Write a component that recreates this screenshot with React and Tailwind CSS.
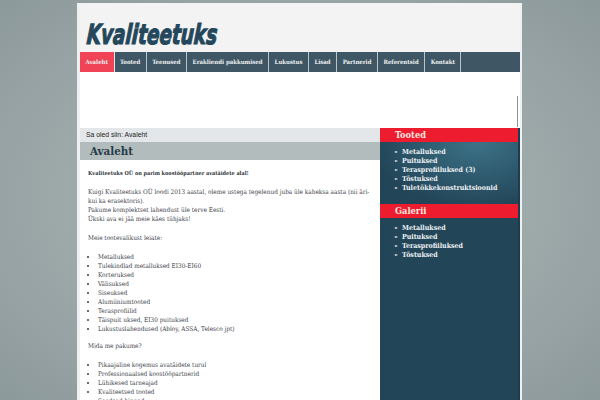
const navItems = ['Tooted', 'Teenused', 'Erakliendi pakkumised', 'Lukustus', 'Lisad', 'Partnerid', 'Referentsid', 'Kontakt'];
const products = ['Metalluksed', 'Tulekindlad metalluksed EI30-EI60', 'Korteruksed', 'Välisuksed', 'Siseuksed', 'Alumiiniumtooted', 'Terasprofiilid', 'Täispuit uksed,  EI30 puituksed', 'Lukustuslahendused  (Abloy,  ASSA,  Telesco jpt)'];
const offers = ['Pikaajaline kogemus avatäidete turul', 'Professionaalsed koostööpartnerid', 'Lühikesed tarneajad', 'Kvaliteetsed tooted', 'Soodsad hinnad'];
const tooted = ['Metalluksed', 'Puituksed', 'Terasprofiiluksed (3)', 'Tõstuksed', 'Tuletõkkekonstruktsioonid'];
const galerii = ['Metalluksed', 'Puituksed', 'Terasprofiiluksed', 'Tõstuksed'];

const SideList = ({ items }) => (
  <ul className="pl-[15px] pt-[5px] text-[7px] leading-[9px] font-bold whitespace-nowrap text-[#eef2f4]">
    {items.map((item) => (
      <li key={item} className="flex items-center">
        <span className="w-[7px] text-[4px]">►</span>
        <span>{item}</span>
      </li>
    ))}
  </ul>
);

const SideTitle = ({ children }) => (
  <h3 className="h-[14px] bg-[#ed1c2e] pl-[15px] text-[9.2px] leading-[14px] font-bold text-[#f6e9e0]">{children}</h3>
);

const App = () => {
  return (
    <div className="h-[400px] w-[600px] overflow-hidden bg-[radial-gradient(ellipse_at_center,#b0b9b9_0%,#9ca7a8_60%,#8c999b_100%)] pt-[3px] font-['DejaVu_Serif_Condensed','DejaVu_Serif',serif]">
      <div className="ml-[77px] h-[397px] w-[445px] bg-[#eef1f1] pl-[3px] pr-[2px]">
        <div className="flex h-[49px] items-end bg-[#f3f3f3] pb-[3px] pl-[7px]">
          <div className="origin-left scale-x-[0.67] -skew-x-[6deg] font-['DejaVu_Sans',sans-serif] text-[27.5px] leading-[30px] font-bold italic whitespace-nowrap text-[#24475b] [-webkit-text-stroke:1.2px_#24475b]">
            Kvaliteetuks
          </div>
        </div>

        <nav className="flex h-[20px] bg-[#3f5665] text-[6px] leading-[20px] font-bold whitespace-nowrap text-[#eef1f2]">
          <a className="border-r border-[#dfe5e8] bg-[#f04355] px-[5.5px]">Avaleht</a>
          {navItems.map((item) => (
            <a key={item} className="border-r border-[#b9c5cc] px-[5.5px]">{item}</a>
          ))}
        </nav>

        <div className="flex h-[56px] items-end justify-end bg-white pr-[2px]">
          <div className="mb-[1px] h-[31px] w-[1px] bg-[#8a9499]"></div>
        </div>

        <div className="flex">
          <main className="h-[272px] w-[300px] overflow-hidden bg-white">
            <div className="h-[14px] bg-[#e4e7ea] pl-[6px] font-['Liberation_Sans',sans-serif] text-[6.8px] leading-[14px] text-[#222]">Sa oled siin: Avaleht</div>
            <h1 className="h-[18px] bg-[#b3bcbc] pl-[10px] text-[11.5px] leading-[18px] font-bold text-[#243b49]">Avaleht</h1>
            <div className="pt-[9px] pl-[8px] text-[6.4px] leading-[9px] whitespace-nowrap text-[#3a4148]">
              <p className="text-[5.5px] font-bold text-[#2d343a]">Kvaliteetuks OÜ on parim koostööpartner avatäidete alal!</p>
              <p className="mt-[10px]">
                Kuigi Kvaliteetuks OÜ loodi 2013 aastal,  oleme ustega  tegelenud juba üle kaheksa aasta (nii äri-<br />
                kui ka erasektoris).<br />
                Pakume komplektset lahendust üle terve Eesti.<br />
                Ükski ava ei jää meie käes tühjaks!
              </p>
              <p className="mt-[10px]">Meie tootevalikust leiate:</p>
              <ul className="mt-[10px] list-disc pl-[10px]">
                {products.map((item) => (
                  <li key={item}>{item}</li>
                ))}
              </ul>
              <p className="mt-[8px]">Mida me pakume?</p>
              <ul className="mt-[10px] list-disc pl-[10px]">
                {offers.map((item) => (
                  <li key={item}>{item}</li>
                ))}
              </ul>
            </div>
          </main>

          <aside className="h-[272px] w-[140px] border-r-2 border-[#1f3d4f] bg-[#234558]">
            <SideTitle>Tooted</SideTitle>
            <div className="h-[62px] bg-[radial-gradient(ellipse_at_70%_0%,#3c7388_0%,#234558_75%)]">
              <SideList items={tooted} />
            </div>
            <SideTitle>Galerii</SideTitle>
            <SideList items={galerii} />
          </aside>
        </div>
      </div>
    </div>
  );
};

export default App;
